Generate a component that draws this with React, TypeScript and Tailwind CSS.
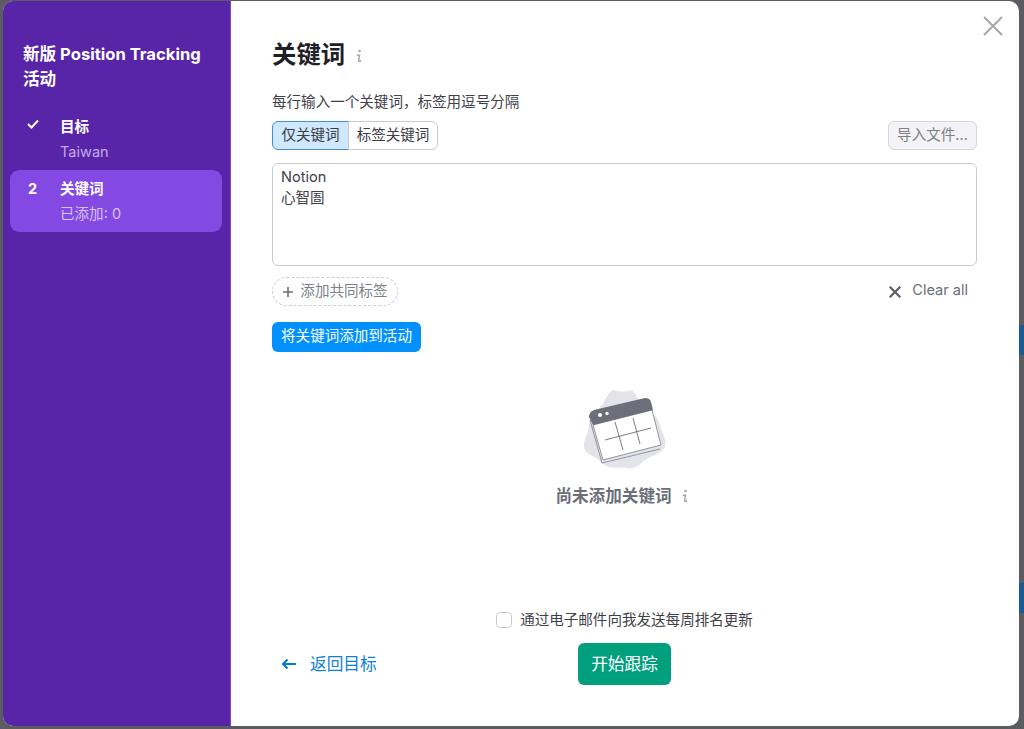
import React from 'react';

const cjk = "font-['Inter','Noto_Sans_CJK_SC',sans-serif]";

function InfoIcon({ className }: { className?: string }) {
  return (
    <svg viewBox="0 0 8 14" className={className} fill="none" stroke="currentColor">
      <circle cx="4.6" cy="2" r="1.3" fill="currentColor" stroke="none" />
      <path d="M1.8 6.200h2.700L3.600 11.500q-.1 1 .8 .9l1.800-.6" strokeWidth="1.500" />
    </svg>
  );
}

function EmptyPicture() {
  return (
    <svg viewBox="0 0 90 85" className="w-[90px] h-[85px]">
      <path
        d="M33 3C40 5 46 5 52 3C57 8 59 15 65 20C72 24 78 30 80 38C82 47 87 52 85 60C82 66 75 68 68 71C62 75 56 83 47 81C38 79 30 84 21 75C16 69 5 68 4 60C3 52 9 47 9 38C9 28 18 24 23 17C26 11 28 6 33 3Z"
        fill="#e3e3ea"
      />
      <path d="M10 33L22 76L80 62" fill="none" stroke="#8a8b95" strokeWidth="0.9" />
      <path d="M13 38L72 23L81 58L23 73Z" fill="#fff" stroke="#8a8b95" strokeWidth="0.9" />
      <path d="M9 30Q9 25 14 23L65 11Q70 11 71 15L73 23L13 38Z" fill="#6c6e79" />
      <circle cx="20" cy="28" r="2" fill="#fff" />
      <circle cx="27" cy="26.500" r="1.700" fill="#fff" />
      <path d="M25 53L71 41M35 35L43 63M53 31L60 57" stroke="#6c6e79" strokeWidth="0.9" fill="none" />
    </svg>
  );
}

export default function App() {
  return (
    <div className={`h-[729px] w-[1024px] overflow-hidden flex bg-[#5b5b62] pt-px pb-[3px] ${cjk}`}>
      <div className="w-[3px] shrink-0" />

      <div className="relative w-[1016px] shrink-0 flex rounded-[10px] overflow-hidden bg-white">
        <aside className="w-[228px] shrink-0 bg-[#5824a8] border-r border-[#7f45d6] text-white">
          <h2 className="pt-[41px] pl-5 pr-5 text-[16.6px] leading-[25px] font-bold">新版 Position Tracking 活动</h2>
          <div className="mt-[18px] flex h-[60px] px-[7px]">
            <div className="flex w-[50px] pl-[17px] pt-[9px] items-start">
              <svg viewBox="0 0 12 10" className="w-3 h-[10px]" fill="none" stroke="white" strokeWidth="2">
                <path d="M1 5l3.500 3.500L11 1.500" />
              </svg>
            </div>
            <div className="pt-[5px]">
              <div className="text-[14.55px] leading-[25px] font-bold">目标</div>
              <div className="text-[14.55px] leading-[25px] text-[#c2a9ea]">Taiwan</div>
            </div>
          </div>
          <div className="ml-[7px] mr-2 flex h-[62px] rounded-[9px] bg-[#8549e3]">
            <div className="w-[50px] pl-[18px] pt-[7px] text-[14.55px] leading-[25px] font-bold">2</div>
            <div className="pt-[7px]">
              <div className="text-[14.55px] leading-[25px] font-bold">关键词</div>
              <div className="text-[14.55px] leading-[25px] text-[#d6c3f5]">已添加: 0</div>
            </div>
          </div>
        </aside>

        <main className="flex-1 flex flex-col pl-[41px] pr-[42px] pt-[36px]">
          <div className="flex items-center h-[34px]">
            <h1 className="text-[24.4px] leading-[34px] font-bold text-[#1f2026]">关键词</h1>
            <InfoIcon className="ml-[10px] mt-1 w-2 h-[14px] text-[#a4a6b3]" />
          </div>

          <p className="mt-[21px] text-[14.55px] leading-5 text-[#3f404a]">每行输入一个关键词，标签用逗号分隔</p>

          <div className="mt-[9px] flex items-center justify-between text-[14.55px]">
            <div className="flex">
              <button className="h-[29px] w-[77px] rounded-l-md border border-[#3f8fd9] bg-[#cfe8fd] text-[#3b3d47]">仅关键词</button>
              <button className="h-[29px] w-[90px] -ml-px rounded-r-md border border-[#c9cad6] bg-white text-[#3b3d47]">标签关键词</button>
            </div>
            <button className="h-[29px] w-[89px] rounded-md border border-[#d5d6e0] bg-[#f3f3f6] text-[#7d7f8a]">导入文件...</button>
          </div>

          <div className="mt-[13px] h-[103px] rounded-md border border-[#c9cad6] px-2 py-[3px] text-[14.55px] leading-[21px] text-[#3f404a]">
            <div>Notion</div>
            <div>心智圄</div>
          </div>

          <div className="mt-[11px] flex items-center justify-between text-[14.55px]">
            <button className="h-[29px] w-[126px] flex items-center justify-center gap-[6px] rounded-full border border-dashed border-[#c9cad6] text-[#7d7f8a]">
              <svg viewBox="0 0 12 12" className="w-3 h-3" stroke="#6c6e79" strokeWidth="1.600">
                <path d="M6 1v10M1 6h10" />
              </svg>
              添加共同标签
            </button>
            <div className="flex items-center gap-[10px] pr-[9px] pb-[2px] text-[#6c6e79]">
              <svg viewBox="0 0 12 12" className="ml-[-2px] mt-[2px] w-[14px] h-[14px]" stroke="#5f616c" strokeWidth="2">
                <path d="M1.500 1.500l9 9M10.500 1.500l-9 9" />
              </svg>
              Clear all
            </div>
          </div>

          <button className="mt-4 h-[30px] w-[149px] rounded-md bg-[#0091ff] text-[14.55px] text-white">将关键词添加到活动</button>

          <div className="mt-[35px] flex flex-col items-center">
            <EmptyPicture />
            <div className="mt-3 mr-[5px] flex items-center gap-[9px] text-[16.6px] leading-6 font-bold text-[#6c6e79]">
              尚未添加关键词
              <InfoIcon className="w-2 h-[14px] text-[#a4a6b3]" />
            </div>
          </div>

          <label className="mt-[102px] flex items-center justify-center gap-2 text-[14.55px] leading-5 text-[#3f404a]">
            <span className="w-4 h-4 rounded border border-[#c9cad6] bg-white" />
            通过电子邮件向我发送每周排名更新
          </label>

          <div className="mt-[13px] grid grid-cols-[1fr_auto_1fr] items-center text-[16.7px]">
            <a className="flex items-center gap-[13px] pl-[9px] pt-px text-[#0f7fd9]">
              <svg viewBox="0 0 16 12" className="w-4 h-3" fill="none" stroke="#0678d1" strokeWidth="2">
                <path d="M15 6H2M6.500 1.500L2 6l4.500 4.500" />
              </svg>
              返回目标
            </a>
            <button className="h-[42px] w-[93px] pt-px rounded-md bg-[#00a07e] text-white">开始跟踪</button>
            <div />
          </div>
        </main>

        <button className="absolute top-[15px] right-4 text-[#a4a6b3]">
          <svg viewBox="0 0 20 20" className="w-5 h-5" stroke="currentColor" strokeWidth="2">
            <path d="M1 1l18 18M19 1L1 19" />
          </svg>
        </button>
      </div>

      <div className="w-[5px] shrink-0 flex flex-col">
        <div className="mt-[324px] h-[30px] bg-[#1a5a94]" />
        <div className="mt-[228px] h-[30px] bg-[#1a5a94]" />
      </div>
    </div>
  );
}
